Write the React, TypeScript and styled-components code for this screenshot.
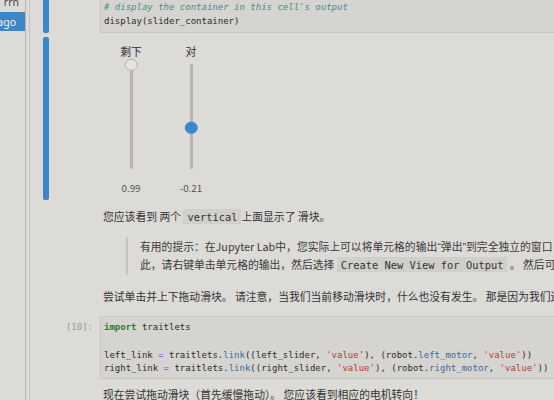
import React from 'react';
import styled, { createGlobalStyle } from 'styled-components';

const GlobalStyle = createGlobalStyle`
  html, body { margin: 0; padding: 0; background: #dcdbd7; overflow: hidden; }
  body { font-family: "Noto Sans CJK SC", "Noto Sans", sans-serif; color: #333; }
`;

const Page = styled.div`
  display: flex;
  width: 554px;
  height: 400px;
  overflow: hidden;
  background: #dcdbd7;
`;

const Sidebar = styled.div`
  width: 25px;
  flex-shrink: 0;
  border-right: 1px solid #b7b5b1;
  display: flex;
  flex-direction: column;
  overflow: hidden;
`;

const SideItem = styled.div<{ $active?: boolean; $h: number }>`
  height: ${(p) => p.$h}px;
  flex-shrink: 0;
  display: flex;
  align-items: ${(p) => (p.$active ? 'center' : 'flex-end')};
  justify-content: flex-end;
  padding: ${(p) => (p.$active ? '0 9px 0 0' : '0 6px 5px 0')};
  overflow: hidden;
  white-space: nowrap;
  font-family: "Noto Sans", "DejaVu Sans", sans-serif;
  font-size: 10.5px;
  line-height: 10px;
  background: ${(p) => (p.$active ? '#3b87c8' : 'transparent')};
  color: ${(p) => (p.$active ? '#f4f6f8' : '#444')};
`;

const Main = styled.div`
  flex: 1;
  margin-left: 3px;
  border-left: 1px solid #c4c2be;
  display: flex;
  flex-direction: column;
  overflow: hidden;
  min-width: 0;
`;

const Cell = styled.div<{ $gap: number }>`
  display: flex;
  align-items: stretch;
  margin-top: ${(p) => p.$gap}px;
  flex-shrink: 0;
`;

const Collapser = styled.div`
  width: 19px;
  flex-shrink: 0;
  padding-left: 13px;
  box-sizing: border-box;
  display: flex;
`;

const ActiveBar = styled.div<{ $cutTop?: boolean }>`
  width: 6px;
  background: #3b87c8;
  border-radius: ${(p) => (p.$cutTop ? '0 0 2px 2px' : '2px')};
`;

const Prompt = styled.div`
  width: 51px;
  flex-shrink: 0;
  box-sizing: border-box;
  padding: 5px 7px 0 0;
  text-align: right;
  font-family: "DejaVu Sans Mono", monospace;
  font-size: 9px;
  line-height: 13.8px;
  color: #9d9c99;
`;

const CellBody = styled.div`
  flex: 1;
  min-width: 0;
`;

const CodeBox = styled.pre<{ $cutTop?: boolean }>`
  margin: 0;
  background: #d5d4d0;
  border: 1px solid #c8c7c3;
  border-top: ${(p) => (p.$cutTop ? 'none' : '1px solid #c8c7c3')};
  border-right: none;
  padding: ${(p) => (p.$cutTop ? '1.4px 4px 3px 3px' : '4px 4px 2px 3px')};
  font-family: "DejaVu Sans Mono", monospace;
  font-size: 9px;
  line-height: 13.8px;
  color: #2b2b2b;
  white-space: pre;
  overflow: hidden;
`;

const Kw = styled.span`color: #2c7a2c; font-weight: bold;`;
const Cm = styled.span`color: #4b8a8a; font-style: italic;`;
const Str = styled.span`color: #b23a3a;`;
const Op = styled.span`color: #a43fd0;`;
const Prop = styled.span`color: #3d66a0;`;

const Output = styled.div`
  display: flex;
  padding: 7px 0 5px 1px;
`;

const SliderColumn = styled.div`
  width: 60px;
  display: flex;
  flex-direction: column;
  align-items: center;
`;

const SliderLabel = styled.div`
  font-size: 10.8px;
  line-height: 14px;
  color: #333;
`;

const SliderBox = styled.div`
  padding: 6px 0;
  display: flex;
  justify-content: center;
`;

const Track = styled.div`
  position: relative;
  width: 3px;
  height: 105px;
  background: #bab6af;
  border-radius: 1px;
`;

const Thumb = styled.div<{ $filled?: boolean }>`
  position: absolute;
  left: 50%;
  width: 12.5px;
  height: 12.5px;
  box-sizing: border-box;
  border-radius: 50%;
  transform: translate(-50%, -50%);
  background: ${(p) => (p.$filled ? '#3b87c8' : '#e4e3df')};
  border: 1px solid ${(p) => (p.$filled ? '#3b87c8' : '#b3b1ac')};
`;

const SliderValue = styled.div`
  margin-top: 6px;
  font-size: 9.8px;
  line-height: 14px;
  color: #555;
`;

const Markdown = styled.div`
  padding-left: 3px;
  font-size: 10.8px;
  line-height: 17px;
  color: #333;
  white-space: nowrap;
`;

const Para = styled.p<{ $gap: number }>`
  margin: ${(p) => p.$gap}px 0 0 0;
`;

const Quote = styled.blockquote`
  margin: 11px 0 0 23px;
  padding: 1px 0 1px 12px;
  border-left: 2px solid #c6c4c0;
  color: #3a3a3a;
`;

const QuoteLine = styled.span`
  display: block;
`;

const LatinMark = styled.span`
  font-family: "Liberation Sans", sans-serif;
`;

const InlineCode = styled.code`
  font-family: "DejaVu Sans Mono", monospace;
  font-size: 10.4px;
  background: #d0cfcb;
  padding: 1.5px 4px;
  color: #333;
`;

type SliderProps = { label: string; value: number; filled?: boolean };

const VSlider: React.FC<SliderProps> = ({ label, value, filled }) => {
  const top = ((1 - value) / 2) * 105;
  return (
    <SliderColumn>
      <SliderLabel>{label}</SliderLabel>
      <SliderBox>
        <Track>
          <Thumb $filled={filled} style={{ top: `${top}px` }} />
        </Track>
      </SliderBox>
      <SliderValue>{value.toFixed(2)}</SliderValue>
    </SliderColumn>
  );
};

export default function App() {
  return (
    <>
      <GlobalStyle />
      <Page>
        <Sidebar>
          <SideItem $h={7}>rrn</SideItem>
          <SideItem $h={19} $active>ago</SideItem>
        </Sidebar>
        <Main>
          <Cell $gap={0}>
            <Collapser>
              <ActiveBar $cutTop />
            </Collapser>
            <Prompt />
            <CellBody>
              <CodeBox $cutTop>
                <Cm># display the container in this cell's output</Cm>
                {'\n'}display(slider_container)
              </CodeBox>
            </CellBody>
          </Cell>

          <Cell $gap={4}>
            <Collapser>
              <ActiveBar />
            </Collapser>
            <Prompt />
            <CellBody>
              <Output>
                <VSlider label="剩下" value={0.99} />
                <VSlider label="对" value={-0.21} filled />
              </Output>
            </CellBody>
          </Cell>

          <Cell $gap={0}>
            <Collapser />
            <Prompt />
            <CellBody>
              <Markdown>
                <Para $gap={8}>
                  您应该看到 两个 <InlineCode>vertical</InlineCode>上面显示了 滑块。
                </Para>
                <Quote>
                  <QuoteLine>
                    有用的提示：在Jupyter Lab中，您实际上可以将单元格的输出<LatinMark>“</LatinMark>弹出<LatinMark>”</LatinMark>到完全独立的窗口！ 为
                  </QuoteLine>
                  <QuoteLine>
                    此，请右键单击单元格的输出，然后选择 <InlineCode>Create New View for Output</InlineCode> 。 然后可以将单元格拖动到Jupyter Lab中的新窗口中。
                  </QuoteLine>
                </Quote>
                <Para $gap={13.5}>
                  尝试单击并上下拖动滑块。 请注意，当我们当前移动滑块时，什么也没有发生。 那是因为我们还没有将它们连接到电机上！
                </Para>
              </Markdown>
            </CellBody>
          </Cell>

          <Cell $gap={10.5}>
            <Collapser />
            <Prompt>[10]:</Prompt>
            <CellBody>
              <CodeBox>
                <Kw>import</Kw> traitlets{'\n'}
                {'\n'}
                left_link <Op>=</Op> traitlets.<Prop>link</Prop>((left_slider, <Str>'value'</Str>), (robot.<Prop>left_motor</Prop>, <Str>'value'</Str>)){'\n'}
                right_link <Op>=</Op> traitlets.<Prop>link</Prop>((right_slider, <Str>'value'</Str>), (robot.<Prop>right_motor</Prop>, <Str>'value'</Str>))
              </CodeBox>
            </CellBody>
          </Cell>

          <Cell $gap={0}>
            <Collapser />
            <Prompt />
            <CellBody>
              <Markdown>
                <Para $gap={7}>现在尝试拖动滑块（首先缓慢拖动）。 您应该看到相应的电机转向！</Para>
              </Markdown>
            </CellBody>
          </Cell>
        </Main>
      </Page>
    </>
  );
}
